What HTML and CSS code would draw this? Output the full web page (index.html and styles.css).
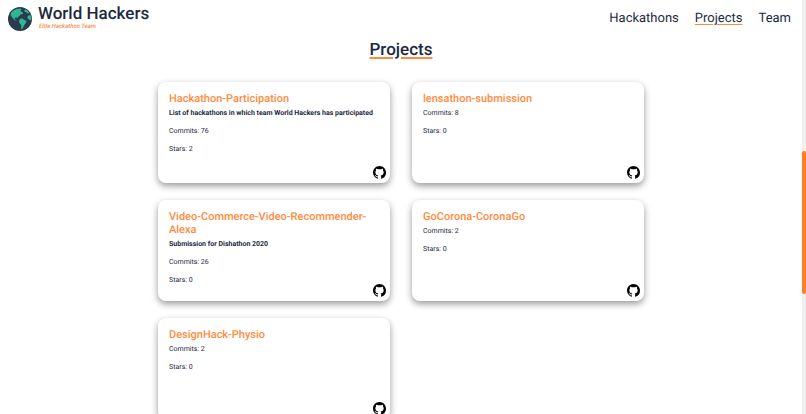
FILE: index.html
```
<!DOCTYPE html>
<html lang="en">
<head>
    <meta charset="UTF-8">
    <meta name="viewport" content="width=device-width, initial-scale=1.0">
    <title>World Hackers</title>
    <link rel="stylesheet" href="styles.css">
</head>
<body>
    <svg class="sprite" aria-hidden="true">
        <symbol id="github" viewBox="0 0 16 16">
            <path d="M8 0C3.58 0 0 3.58 0 8c0 3.54 2.29 6.53 5.47 7.59.4.07.55-.17.55-.38 0-.19-.01-.82-.01-1.49-2.01.37-2.53-.49-2.69-.94-.09-.23-.48-.94-.82-1.13-.28-.15-.68-.52-.01-.53.63-.01 1.08.58 1.23.82.72 1.21 1.87.87 2.33.66.07-.52.28-.87.51-1.07-1.78-.2-3.64-.89-3.64-3.95 0-.87.31-1.59.82-2.15-.08-.2-.36-1.02.08-2.12 0 0 .67-.21 2.2.82.64-.18 1.32-.27 2-.27s1.36.09 2 .27c1.53-1.04 2.2-.82 2.2-.82.44 1.1.16 1.92.08 2.12.51.56.82 1.27.82 2.15 0 3.07-1.87 3.75-3.65 3.95.29.25.54.73.54 1.48 0 1.07-.01 1.93-.01 2.2 0 .21.15.46.55.38A8.01 8.01 0 0 0 16 8c0-4.42-3.58-8-8-8z"/>
        </symbol>
    </svg>

    <div class="page">
        <header class="header">
            <a class="brand" href="#">
                <svg class="globe" viewBox="0 0 24 24" aria-hidden="true">
                    <circle cx="12" cy="12" r="12" fill="#2b3b4e"/>
                    <path fill="#30b593" d="M5 3.8 8.5 1.9l3.7-.4 1.5 1-1.4 1.1 1.3 1.1 1.5 1.1-.4 1.3-2.2.3-1.1 1.5-1.6 1.1-.2 1.5-1-.9-1.7.2-.4 1.3 1.4.6.9 1.1-1.5-.5-2.2-1.5-1.7-2.6-.9-1.6L3 5.9z"/>
                    <path fill="#30b593" d="m12 11.8 2.3-.4 1.8 1.3 2.4 1.2-.5 2.1-1.5 1.6-1 2.2-1.3 2.2-1 .2.1-3.6-1.6-2.4-.8-2z"/>
                    <path fill="#30b593" d="m17.3 2.2 2.5 1.9 1.7 2.2-1.7.3-1.4-1.3-1.5-.3-.6-1.4zM20 8.4l2.6-.2.9 2.6-.5 2.5-2-.5-1.7-2z"/>
                </svg>
                <span class="brand-text">
                    <span class="brand-name">World Hackers</span>
                    <span class="tagline">Elite Hackathon Team</span>
                </span>
            </a>
            <nav class="nav">
                <a href="#hackathons">Hackathons</a>
                <a class="active" href="#projects">Projects</a>
                <a href="#team">Team</a>
            </nav>
        </header>

        <main id="projects">
            <h1>Projects</h1>
            <div class="projects">
                <article class="card">
                    <h2>Hackathon-Participation</h2>
                    <p class="description">List of hackathons in which team World Hackers has participated</p>
                    <p>Commits: 76</p>
                    <p>Stars: 2</p>
                    <a class="repo" href="#" aria-label="Hackathon-Participation on GitHub"><svg><use href="#github"/></svg></a>
                </article>
                <article class="card">
                    <h2>lensathon-submission</h2>
                    <p>Commits: 8</p>
                    <p>Stars: 0</p>
                    <a class="repo" href="#" aria-label="lensathon-submission on GitHub"><svg><use href="#github"/></svg></a>
                </article>
                <article class="card">
                    <h2>Video-Commerce-Video-Recommender-Alexa</h2>
                    <p class="description">Submission for Dishathon 2020</p>
                    <p>Commits: 26</p>
                    <p>Stars: 0</p>
                    <a class="repo" href="#" aria-label="Video-Commerce-Video-Recommender-Alexa on GitHub"><svg><use href="#github"/></svg></a>
                </article>
                <article class="card">
                    <h2>GoCorona-CoronaGo</h2>
                    <p>Commits: 2</p>
                    <p>Stars: 0</p>
                    <a class="repo" href="#" aria-label="GoCorona-CoronaGo on GitHub"><svg><use href="#github"/></svg></a>
                </article>
                <article class="card">
                    <h2>DesignHack-Physio</h2>
                    <p>Commits: 2</p>
                    <p>Stars: 0</p>
                    <a class="repo" href="#" aria-label="DesignHack-Physio on GitHub"><svg><use href="#github"/></svg></a>
                </article>
            </div>
        </main>
    </div>
    <div class="scroll-track" aria-hidden="true">
        <div class="scroll-thumb"></div>
    </div>
</body>
</html>
```
FILE: styles.css
```
* {
    box-sizing: border-box;
}

body {
    display: flex;
    height: 100vh;
    margin: 0;
    overflow: hidden;
    font-family: Roboto, sans-serif;
    text-rendering: geometricPrecision;
    color: #1b2a41;
    background-color: #fff;
}

a {
    color: inherit;
    text-decoration: none;
}

h1, h2, p {
    margin: 0;
}

.sprite {
    display: none;
}

.page {
    flex: 1;
    overflow-y: auto;
    scrollbar-width: none;
}

/* header */
.header {
    display: flex;
    justify-content: space-between;
    align-items: center;
    height: 38px;
    padding: 0 11px 0 8px;
}

.brand {
    display: flex;
    align-items: center;
    gap: 6px;
}

.globe {
    width: 24px;
    height: 24px;
}

.brand-text {
    display: flex;
    flex-direction: column;
    padding-bottom: 4px;
}

.brand-name {
    font-size: 17px;
    font-weight: 500;
    line-height: 18px;
}

.tagline {
    padding-left: 1px;
    font-size: 6px;
    font-style: italic;
    font-weight: 500;
    line-height: 7px;
    color: #ff8b3d;
}

.nav {
    display: flex;
    gap: 16px;
    font-size: 13px;
    line-height: 18px;
}

.nav .active, h1 {
    text-decoration: underline 2px #ff8b3d;
    text-underline-offset: 2px;
}

.nav .active {
    text-decoration-thickness: 1px;
}

/* projects */
h1 {
    font-size: 17px;
    font-weight: 500;
    line-height: 24px;
    text-align: center;
}

.projects {
    display: grid;
    grid-template-columns: 1fr 1fr;
    gap: 17px 22px;
    width: 60%;
    min-width: 486px;
    margin: 0 auto;
    padding: 20px 0;
}

.card {
    display: flex;
    flex-direction: column;
    min-height: 101px;
    padding: 10px 4px 4px 11px;
    border-radius: 8px;
    box-shadow: 0 3px 7px rgba(0, 0, 0, 0.4);
    font-size: 7px;
    line-height: 8px;
}

.card h2 {
    margin: 0 11px 4px 0;
    font-size: 11px;
    font-weight: 500;
    line-height: 13px;
    color: #ff8b3d;
}

.card p + p {
    margin-top: 10px;
}

.description {
    font-weight: 700;
}

.repo {
    align-self: flex-end;
    margin-top: auto;
}

.repo svg {
    display: block;
    width: 13px;
    height: 13px;
}

/* scrollbar */
.scroll-track {
    width: 4px;
    padding-top: 151px;
    background-color: #f0f0f0;
}

.scroll-thumb {
    height: 143px;
    border-radius: 2px;
    background-color: #ff7f27;
}
```
